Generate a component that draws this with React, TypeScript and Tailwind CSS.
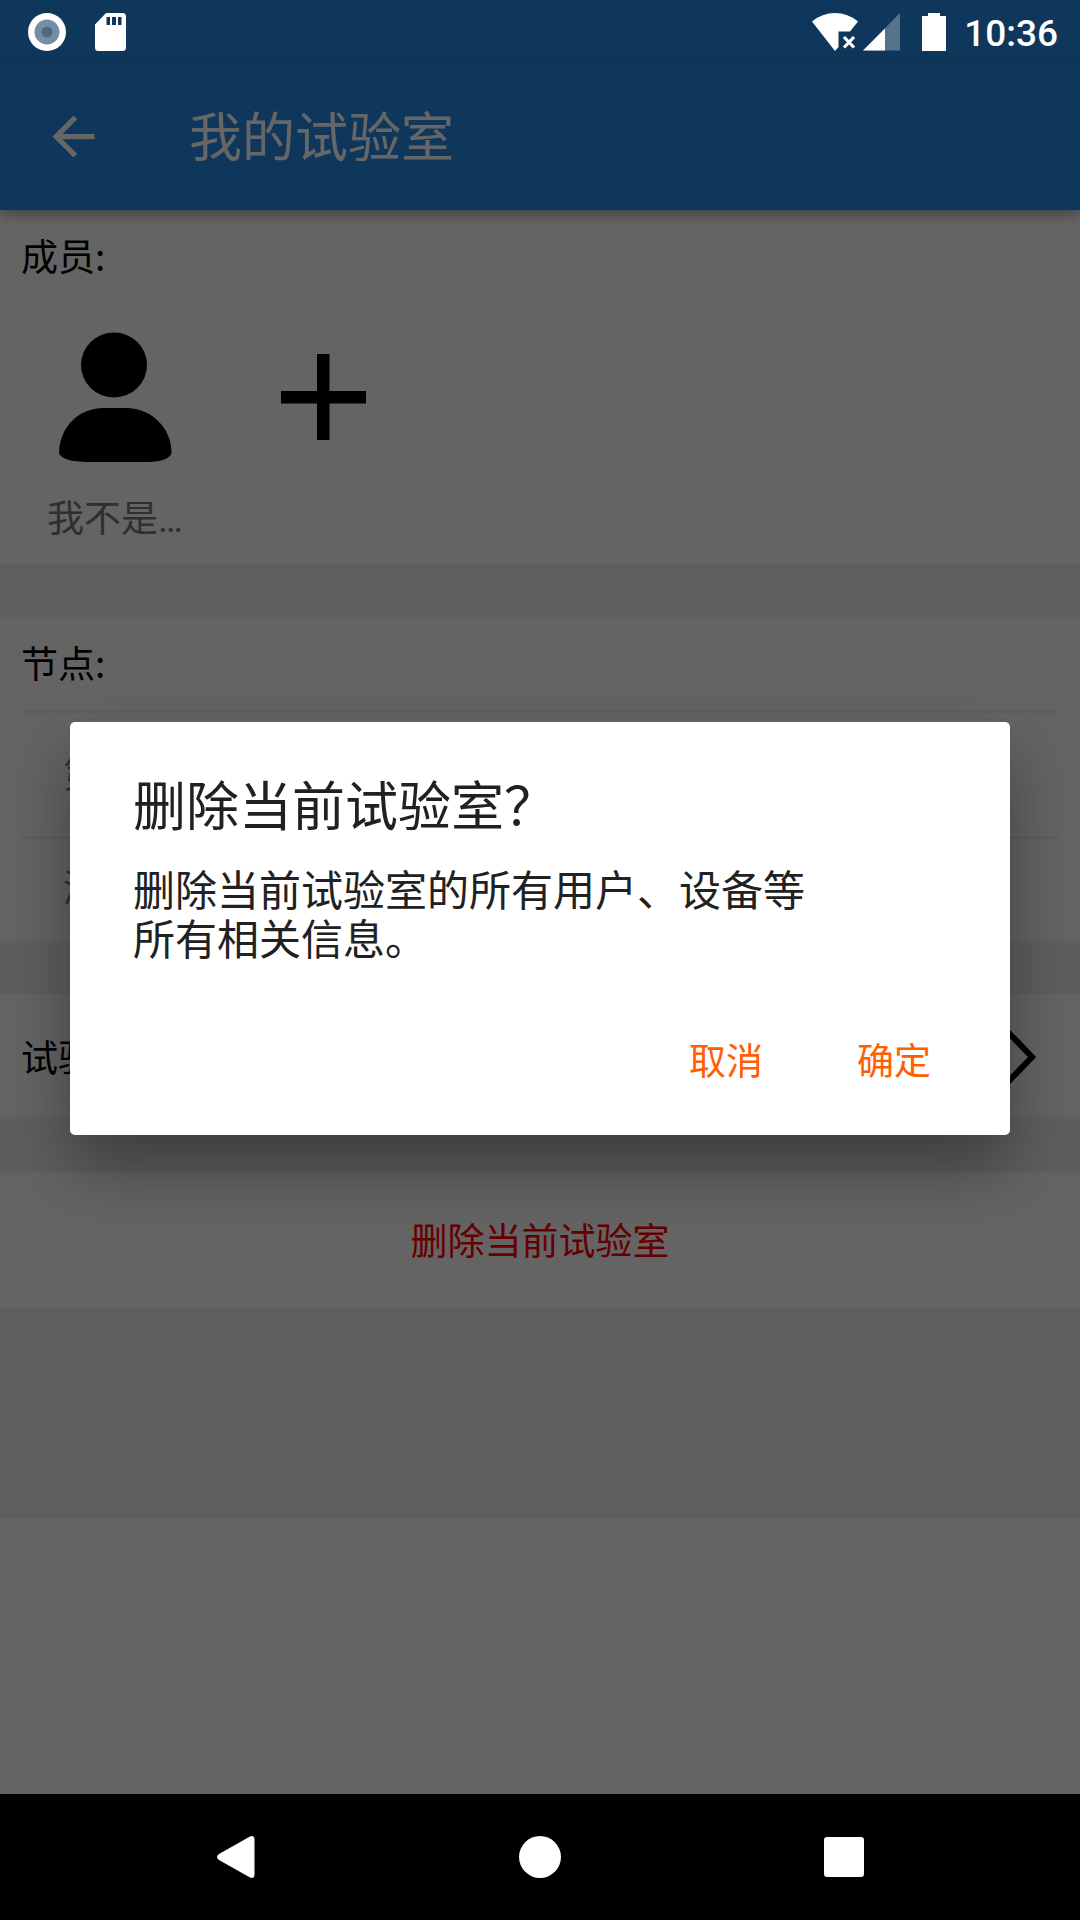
import React, { useState } from "react";

const nodes = ["第1", "添"];

const PersonIcon = () => (
  <svg width="126" height="142" viewBox="0 0 126 142" aria-hidden="true">
    <ellipse cx="62" cy="40" rx="33" ry="32.5" />
    <path d="M50 83H76C100 84 119 103 119.500 127C119.500 132 112 137 94 137H38C17 137 7 133 7 127C8 103 25 84 50 83Z" />
  </svg>
);

const PlusIcon = () => (
  <svg width="90" height="88" viewBox="0 0 90 88" aria-hidden="true">
    <path d="M37 2H49.500V39H86V51.500H49.500V88H37V51.500H1V39H37Z" />
  </svg>
);

const StatusBar = () => (
  <div className="flex h-[63px] items-center justify-between bg-[#0e375b] px-[22px] text-white">
    <div className="flex items-center gap-[23px]">
      <svg width="50" height="50" viewBox="0 0 50 50" aria-hidden="true">
        <circle cx="25" cy="25" r="19" fill="#fff" />
        <circle cx="25" cy="25" r="12.500" fill="#768da3" />
        <circle cx="25" cy="25" r="5.500" fill="#4b6a86" />
      </svg>
      <svg width="31" height="38" viewBox="0 0 31 38" aria-hidden="true">
        <path
          fill="#fff"
          fillRule="evenodd"
          d="M11 0H27.500Q31 0 31 3.500V34.500Q31 38 27.500 38H3.500Q0 38 0 34.500V11.500ZM11.500 4V12H15V4ZM17 4V12H21V4ZM23 4V12H26.500V4Z"
        />
      </svg>
    </div>
    <div className="flex items-center">
      <svg width="46" height="38" viewBox="0 0 46 38" aria-hidden="true">
        <path fill="#fff" d="M0 8.500Q10 0 23 0T46 8.500L38 18.500H26.500V34L23 38Z" />
        <path d="M32 24L42 34.500M42 24L32 34.500" stroke="#fff" strokeWidth="3.200" />
      </svg>
      <svg className="ml-[5px]" width="37" height="38" viewBox="0 0 37 38" aria-hidden="true">
        <path fill="#fff" fillOpacity="0.300" d="M0 37.500L37 0V37.500Z" />
        <path fill="#fff" d="M0 37.500L22 15.500V37.500Z" />
      </svg>
      <svg className="ml-[22px]" width="24" height="38" viewBox="0 0 24 38" aria-hidden="true">
        <path fill="#fff" d="M6 0H18V3H24V38H0V3H6Z" />
      </svg>
      <span className="ml-[18px] pt-1 text-[37px] leading-[44px] font-medium">10:36</span>
    </div>
  </div>
);

const NavigationBar = () => (
  <nav className="flex h-[126px] items-center justify-center gap-[240px] bg-black">
    <button aria-label="返回" className="flex size-16 items-center justify-center">
      <svg width="44" height="44" viewBox="0 0 44 44" fill="#fff">
        <path d="M5 19L36 1.500Q40 0 40.500 4V40Q40 44 36 42.500L5 25Q1 22 5 19Z" />
      </svg>
    </button>
    <button aria-label="主页" className="flex size-16 items-center justify-center">
      <span className="size-[42px] rounded-full bg-white" />
    </button>
    <button aria-label="最近" className="flex size-16 items-center justify-center">
      <span className="size-10 rounded-[3px] bg-white" />
    </button>
  </nav>
);

const App: React.FC = () => {
  const [isDialogOpen, setIsDialogOpen] = useState(true);

  const closeDialog = () => setIsDialogOpen(false);

  return (
    <div className="flex min-h-screen flex-col font-[Roboto,'Noto_Sans_CJK_SC',sans-serif] text-[37px] leading-[48px] text-black">
      <StatusBar />

      <div className="relative flex grow flex-col bg-[#fafafa]">
        {/* App bar */}
        <header className="relative flex h-[147px] items-center bg-[#2389e3] px-[42px] shadow-[0_4px_12px_rgba(0,0,0,0.350)]">
          <button aria-label="返回">
            <svg width="63" height="63" viewBox="0 0 24 24" fill="#fff">
              <path d="M20 11H7.830l5.590-5.590L12 4l-8 8 8 8 1.410-1.410L7.830 13H20v-2z" />
            </svg>
          </button>
          <h1 className="ml-[84px] pt-1 text-[53px] leading-[62px] text-white">我的试验室</h1>
        </header>

        <main className="grow">
          <div className="bg-[#ebebeb] pb-[210px]">
            {/* Members */}
            <section className="h-[354px] bg-[#fafafa] pt-[21px]">
              <h2 className="px-[21px] font-['Noto_Sans_CJK_SC',sans-serif]">成员:</h2>
              <div className="flex px-[10px] pt-[46px]">
                <button className="flex w-[210px] flex-col items-center gap-[29px]">
                  <PersonIcon />
                  <span className="text-[#757575]">我不是…</span>
                </button>
                <button aria-label="添加成员" className="flex h-[142px] w-[210px] items-center justify-center">
                  <PlusIcon />
                </button>
              </div>
            </section>

            {/* Nodes */}
            <section className="mt-[53px] bg-[#fafafa] px-[21px] pt-[21px]">
              <h2 className="pb-6 font-['Noto_Sans_CJK_SC',sans-serif]">节点:</h2>
              <ul>
                {nodes.map((node) => (
                  <li key={node} className="border-t-3 border-[#ebebeb] px-[42px] pt-[27px] pb-[27px] text-[#757575] first:pt-[39px] first:pb-[36px]">
                    {node}
                  </li>
                ))}
              </ul>
            </section>

            <button className="mt-[53px] flex h-[123px] w-full items-center justify-between bg-[#fafafa] px-[21px]">
              <span className="pt-2">试验室</span>
              <svg className="mr-[22px]" width="40" height="60" viewBox="0 0 40 60" aria-hidden="true">
                <path d="M9 4L35 31L9 58" fill="none" stroke="#000" strokeWidth="6" />
              </svg>
            </button>

            <button
              className="mt-14 block h-[135px] w-full bg-[#fafafa] pt-1 text-center text-[#f00]"
              onClick={() => setIsDialogOpen(true)}
            >
              删除当前试验室
            </button>
          </div>
        </main>

        {/* Confirm dialog */}
        {isDialogOpen && (
          <div className="absolute inset-0 flex items-center justify-center bg-black/60 px-[70px]">
            <div
              role="alertdialog"
              aria-labelledby="dialog-title"
              aria-describedby="dialog-text"
              className="w-full rounded-[5px] bg-white px-[63px] pt-[51px] pb-12 text-[#212121] shadow-[0_32px_64px_rgba(0,0,0,0.350)]"
            >
              <h2 id="dialog-title" className="pt-1 text-[53px] leading-[62px]">
                删除当前试验室？
              </h2>
              <p id="dialog-text" className="mt-7 text-[42px] leading-[49px]">
                删除当前试验室的所有用户、设备等
                <br />
                所有相关信息。
              </p>
              <div className="mt-[74px] flex justify-end gap-[94px] pr-4 text-[#ff5f00]">
                <button onClick={closeDialog}>取消</button>
                <button onClick={closeDialog}>确定</button>
              </div>
            </div>
          </div>
        )}
      </div>

      <NavigationBar />
    </div>
  );
};

export default App;
